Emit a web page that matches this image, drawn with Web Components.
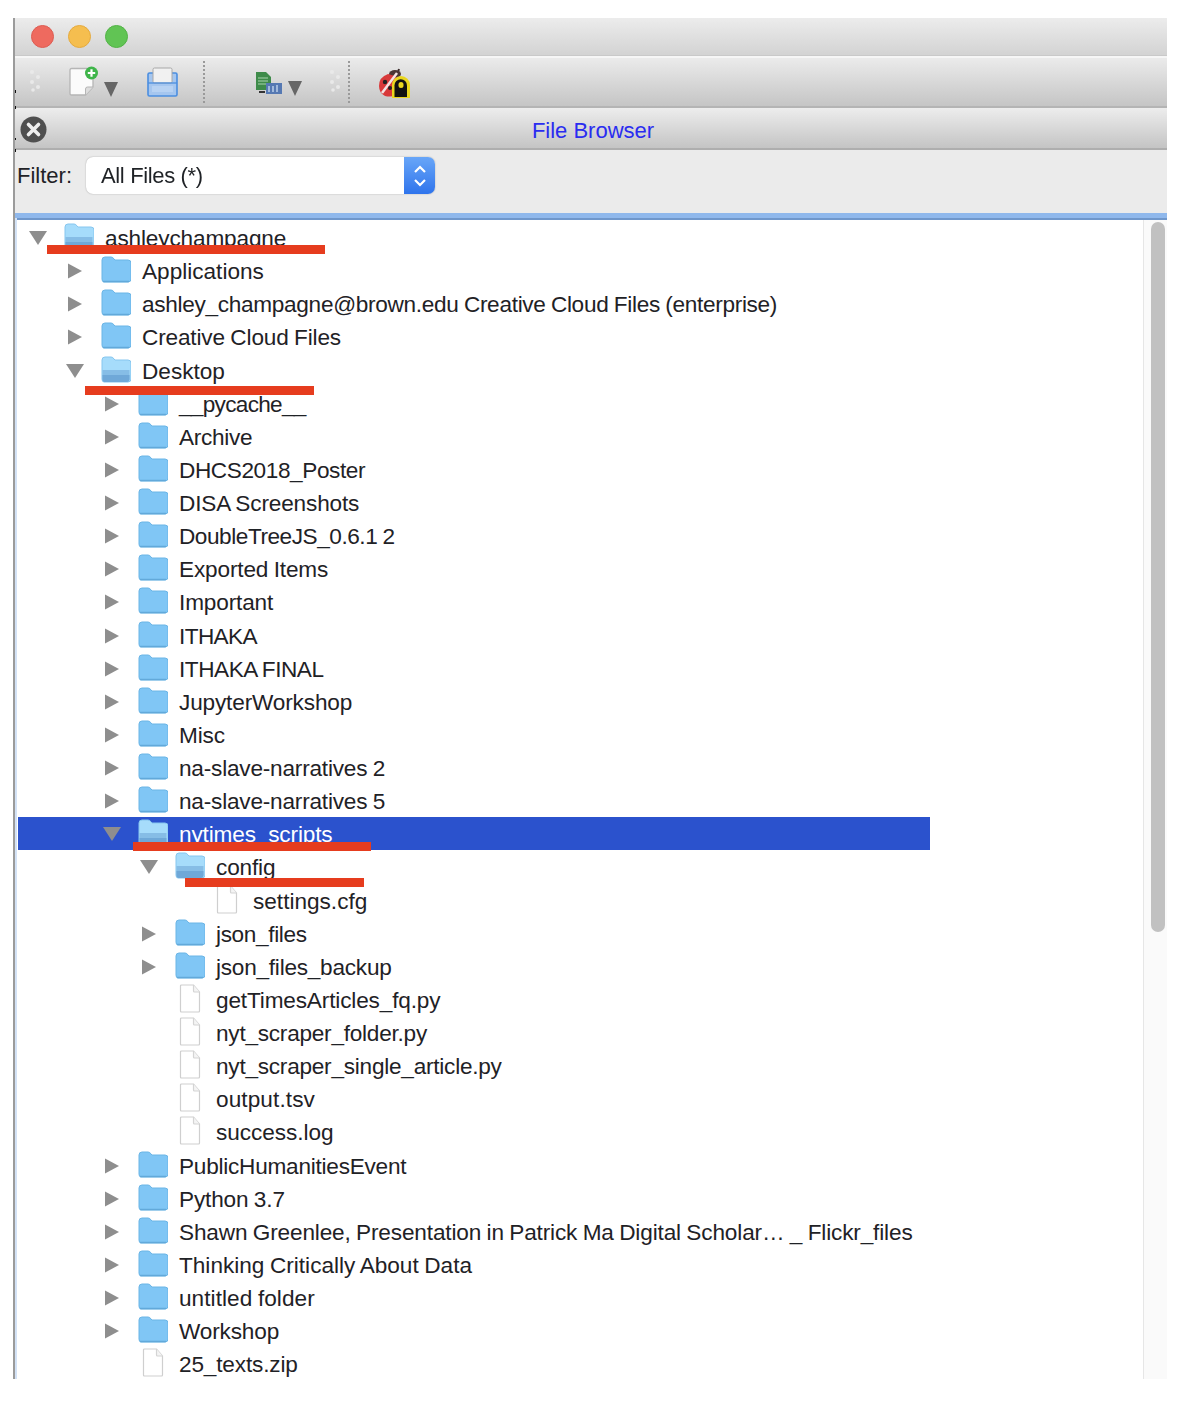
<!DOCTYPE html>
<html>
<head>
<meta charset="utf-8">
<style>
  html, body { margin: 0; background: #fff; }
  body { font-family: "Liberation Sans", Arial, sans-serif; color: #1f2226; }
</style>
</head>
<body>
<app-window>
  <title-bar></title-bar>
  <tool-bar></tool-bar>
  <tab-bar>File Browser</tab-bar>
  <filter-bar>All Files (*)</filter-bar>
  <file-tree>
    <tree-row kind="folder" state="open">ashleychampagne</tree-row>
    <tree-row depth="1" kind="folder" style="letter-spacing:0">Applications</tree-row>
    <tree-row depth="1" kind="folder" style="letter-spacing:-.3px">ashley_champagne@brown.edu Creative Cloud Files (enterprise)</tree-row>
    <tree-row depth="1" kind="folder">Creative Cloud Files</tree-row>
    <tree-row depth="1" kind="folder" state="open" style="letter-spacing:0">Desktop</tree-row>
    <tree-row depth="2" kind="folder" style="letter-spacing:-.7px">__pycache__</tree-row>
    <tree-row depth="2" kind="folder" style="letter-spacing:-.3px">Archive</tree-row>
    <tree-row depth="2" kind="folder" style="letter-spacing:-.4px">DHCS2018_Poster</tree-row>
    <tree-row depth="2" kind="folder">DISA Screenshots</tree-row>
    <tree-row depth="2" kind="folder" style="letter-spacing:-.45px">DoubleTreeJS_0.6.1 2</tree-row>
    <tree-row depth="2" kind="folder">Exported Items</tree-row>
    <tree-row depth="2" kind="folder">Important</tree-row>
    <tree-row depth="2" kind="folder" style="letter-spacing:-.6px">ITHAKA</tree-row>
    <tree-row depth="2" kind="folder" style="letter-spacing:-.45px">ITHAKA FINAL</tree-row>
    <tree-row depth="2" kind="folder">JupyterWorkshop</tree-row>
    <tree-row depth="2" kind="folder">Misc</tree-row>
    <tree-row depth="2" kind="folder" style="letter-spacing:-.2px">na-slave-narratives 2</tree-row>
    <tree-row depth="2" kind="folder" style="letter-spacing:-.2px">na-slave-narratives 5</tree-row>
    <tree-row depth="2" kind="folder" state="open" selected>nytimes_scripts</tree-row>
    <tree-row depth="3" kind="folder" state="open">config</tree-row>
    <tree-row depth="4" kind="file" style="letter-spacing:0">settings.cfg</tree-row>
    <tree-row depth="3" kind="folder" style="letter-spacing:-.35px">json_files</tree-row>
    <tree-row depth="3" kind="folder" style="letter-spacing:-.24px">json_files_backup</tree-row>
    <tree-row depth="3" kind="file">getTimesArticles_fq.py</tree-row>
    <tree-row depth="3" kind="file" style="letter-spacing:-.24px">nyt_scraper_folder.py</tree-row>
    <tree-row depth="3" kind="file" style="letter-spacing:-.24px">nyt_scraper_single_article.py</tree-row>
    <tree-row depth="3" kind="file" style="letter-spacing:.1px">output.tsv</tree-row>
    <tree-row depth="3" kind="file" style="letter-spacing:-.05px">success.log</tree-row>
    <tree-row depth="2" kind="folder" style="letter-spacing:-.24px">PublicHumanitiesEvent</tree-row>
    <tree-row depth="2" kind="folder">Python 3.7</tree-row>
    <tree-row depth="2" kind="folder">Shawn Greenlee, Presentation in Patrick Ma Digital Scholar… _ Flickr_files</tree-row>
    <tree-row depth="2" kind="folder" style="letter-spacing:0">Thinking Critically About Data</tree-row>
    <tree-row depth="2" kind="folder" style="letter-spacing:.05px">untitled folder</tree-row>
    <tree-row depth="2" kind="folder">Workshop</tree-row>
    <tree-row depth="2" kind="file">25_texts.zip</tree-row>
    <!-- red annotation strokes drawn over the tree -->
    <red-mark slot="marks" style="left:32px;top:27px;width:278px"></red-mark>
    <red-mark slot="marks" style="left:70px;top:168px;width:229px"></red-mark>
    <red-mark slot="marks" style="left:118px;top:624px;width:238px"></red-mark>
    <red-mark slot="marks" style="left:170px;top:660px;width:179px"></red-mark>
  </file-tree>
</app-window>

<script>
const FOLDER_CLOSED = `
  <svg width="30" height="27" viewBox="0 0 30 27">
    <path d="M1 4q0-3 3-3h6q2 0 3 2l1 1h13q3 0 3 3v16q0 3-3 3H3q-2 0-2-3z" fill="#80c6f5" stroke="#6bb5e6"/>
    <path d="M2 25.500h26" stroke="#62a9da" stroke-width="1.500"/>
  </svg>`;

const FOLDER_OPEN = `
  <svg width="30" height="27" viewBox="0 0 30 27">
    <path d="M1 4q0-3 3-3h6q2 0 3 2l1 1h13q3 0 3 3v16q0 3-3 3H3q-2 0-2-3z" fill="#a6dcfb" stroke="#86c6ef"/>
    <path d="M1.500 14h27v9q0 3-3 3H4q-2.500 0-2.500-3z" fill="#86bde6"/>
    <path d="M1.500 19h27v4q0 3-3 3H4q-2.500 0-2.500-3z" fill="#6fa8d8"/>
  </svg>`;

const FILE_ICON = `
  <svg width="22" height="29" viewBox="0 0 22 29">
    <path d="M1.500 2q0-1 1-1h12l6 7v19q0 1-1 1h-17q-1 0-1-1z" fill="#fff" stroke="#cfcfcf" stroke-width="1.200"/>
    <path d="M14.500 1v6q0 1 1 1h5" fill="#f4f4f4" stroke="#d4d4d4" stroke-width="1.200"/>
  </svg>`;

const ARROW_RIGHT = `<svg width="18" height="16" viewBox="0 0 18 16"><path d="M2 0.500L16 8 2 15.500z" fill="#8e8e8e"/></svg>`;
const ARROW_DOWN = `<svg width="18" height="16" viewBox="0 0 18 16"><path d="M0 1h18L9 15z" fill="#8e8e8e"/></svg>`;

const GRIP = `
  <svg width="12" height="24" viewBox="0 0 12 24" fill="#e9e9e9">
    <circle cx="3" cy="3" r="2"/><circle cx="9" cy="8" r="2"/><circle cx="3" cy="13" r="2"/><circle cx="9" cy="18" r="2"/><circle cx="4" cy="21" r="1.800"/>
  </svg>`;

const DROP = `<svg width="14" height="15" viewBox="0 0 14 15"><path d="M0 0h14L7 15z" fill="#666"/></svg>`;

class AppWindow extends HTMLElement {
  connectedCallback() {
    this.attachShadow({ mode: 'open' });
    this.shadowRoot.innerHTML = `
      <style>
        :host {
          display: flex;
          flex-direction: column;
          width: 1154px;
          height: 1361px;
          margin: 18px 0 0 13px;
          box-sizing: border-box;
          border-left: 2px solid #9b9b9b;
          overflow: hidden;
          filter: blur(0.6px);
          position: relative;
        }
        .speck {
          position: absolute;
          left: -2px;
          width: 3px;
          height: 3px;
          background: #111;
        }
      </style>
      <slot></slot>
      <div class="speck" style="top:72px"></div>
      <div class="speck" style="top:88px"></div>
      <div class="speck" style="top:120px;height:2px"></div>
      <div class="speck" style="top:131px"></div>
    `;
  }
}

class TitleBar extends HTMLElement {
  connectedCallback() {
    this.attachShadow({ mode: 'open' });
    this.shadowRoot.innerHTML = `
      <style>
        :host {
          display: flex;
          align-items: center;
          gap: 14px;
          height: 38px;
          padding-left: 16px;
          box-sizing: border-box;
          background: linear-gradient(#ececec, #d3d3d3);
          border-bottom: 1px solid #c9c9c9;
        }
        i {
          width: 23px;
          height: 23px;
          border-radius: 50%;
          box-sizing: border-box;
          border: 1px solid var(--edge);
          background: var(--fill);
        }
      </style>
      <i style="--fill:#ee6a5f;--edge:#dd5c52"></i>
      <i style="--fill:#f5be4f;--edge:#e5aa3e"></i>
      <i style="--fill:#61c454;--edge:#52b346"></i>
    `;
  }
}

class ToolBar extends HTMLElement {
  connectedCallback() {
    this.attachShadow({ mode: 'open' });
    this.shadowRoot.innerHTML = `
      <style>
        :host {
          display: flex;
          align-items: center;
          height: 52px;
          box-sizing: border-box;
          border-top: 2px solid #f6f6f6;
          border-bottom: 2px solid #b4b4b4;
          background: linear-gradient(#ebebeb, #c5c5c5);
        }
        .item { display: flex; flex: none; }
        .sep {
          flex: none;
          height: 42px;
          border-left: 2px dotted #9a9a9a;
        }
      </style>
      <div class="item" style="margin:0 0 2px 14px">${GRIP}</div>
      <div class="item" style="margin:0 0 0 27px">
        <svg width="32" height="32" viewBox="0 0 32 32">
          <path d="M2 4q0-1.500 1.500-1.500h20q1.500 0 1.500 1.500v17l-7.500 8H3.500q-1.500 0-1.500-1.500z" fill="#fbfbfb" stroke="#b5b5b5" stroke-width="1.300"/>
          <path d="M17.500 29v-6q0-2 2-2h5.500" fill="#ddd" stroke="#b5b5b5"/>
          <circle cx="23.500" cy="7" r="6.500" fill="#3fb54a"/>
          <path d="M23.500 3.300v7.400M19.800 7h7.400" stroke="#fff" stroke-width="2.200"/>
        </svg>
      </div>
      <div class="item" style="margin:14px 0 0 4px">${DROP}</div>
      <div class="item" style="margin:0 0 0 29px">
        <svg width="31" height="30" viewBox="0 0 31 30">
          <rect x="1" y="6" width="29" height="23" rx="1.500" fill="#a5c6ef" stroke="#4b8ee0" stroke-width="1.600"/>
          <rect x="6" y="1" width="19" height="15" rx="1.500" fill="#f1f1f1" stroke="#a8a8a8"/>
          <path d="M1 16h29" stroke="#4b8ee0" stroke-width="1.300"/>
          <rect x="5" y="19" width="21" height="6" fill="#b7d2f3"/>
        </svg>
      </div>
      <div class="sep" style="margin-left:25px"></div>
      <div class="item" style="margin:2px 0 0 50px">
        <svg width="28" height="24" viewBox="0 0 28 24">
          <path d="M1 1h10l5 5v13H1z" fill="#3e8b4a"/>
          <path d="M3 7h10M3 10h10M3 13h8" stroke="#a9d4ae"/>
          <rect x="11" y="12" width="16" height="11" fill="#5679b3"/>
          <path d="M14 15v6M18 15v6M22 14v7" stroke="#bcd0ea" stroke-width="1.500"/>
          <path d="M4 21h6" stroke="#333" stroke-width="2"/>
        </svg>
      </div>
      <div class="item" style="margin:12px 0 0 5px">${DROP}</div>
      <div class="item" style="margin:0 0 2px 27px">${GRIP}</div>
      <div class="sep" style="margin-left:7px"></div>
      <div class="item" style="margin:0 0 0 28px">
        <svg width="32" height="31" viewBox="0 0 32 31">
          <path d="M17 4l-3 4M21 2l-2 6" stroke="#3a2a2a" stroke-width="2"/>
          <ellipse cx="17" cy="7" rx="6" ry="4" fill="#4a3434"/>
          <path d="M1 19q0-9 9-12l7 2 7 8v8q-8 6-17 4-6-3-6-10z" fill="#d8393a"/>
          <path d="M4 26L19 6" stroke="#f4e4e4" stroke-width="2.500"/>
          <circle cx="7" cy="15" r="2.200" fill="#222"/><circle cx="12" cy="21" r="2" fill="#222"/>
          <path d="M14 18a8 8 0 0 1 18 0v13H14z" fill="#e9d61f"/>
          <path d="M16.500 18.500a6 6 0 0 1 12.500 0V30H16.500z" fill="#111"/>
          <rect x="20.500" y="15" width="5" height="6" rx="2.500" fill="#e9d61f"/>
        </svg>
      </div>
    `;
  }
}

class TabBar extends HTMLElement {
  connectedCallback() {
    this.attachShadow({ mode: 'open' });
    this.shadowRoot.innerHTML = `
      <style>
        :host {
          display: block;
          position: relative;
          height: 42px;
          box-sizing: border-box;
          padding-left: 4px;
          border-top: 1px solid #ededed;
          border-bottom: 2px solid #aeaeae;
          background: linear-gradient(#ececec, #c4c4c4);
          text-align: center;
          line-height: 44px;
          font-size: 22px;
          color: #2a2cf0;
        }
        .close {
          position: absolute;
          left: 5px;
          top: 7px;
          width: 27px;
          height: 27px;
        }
      </style>
      <svg class="close" viewBox="0 0 27 27">
        <circle cx="13.500" cy="13.500" r="13" fill="#4f4f4f"/>
        <path d="M8.500 8.500l10 10M18.500 8.500l-10 10" stroke="#efefef" stroke-width="3.600" stroke-linecap="round"/>
      </svg>
      <slot></slot>
    `;
  }
}

class FilterBar extends HTMLElement {
  connectedCallback() {
    this.attachShadow({ mode: 'open' });
    this.shadowRoot.innerHTML = `
      <style>
        :host {
          display: flex;
          align-items: flex-start;
          height: 63px;
          box-sizing: border-box;
          padding: 7px 0 0 2px;
          background: #ebebeb;
          font-size: 22px;
        }
        .label { width: 69px; line-height: 38px; }
        .combo {
          display: flex;
          width: 349px;
          height: 37px;
          box-sizing: border-box;
          border-radius: 7px;
          background: #fff;
          box-shadow: 0 0 1.500px #9a9a9a;
          overflow: hidden;
        }
        .value { flex: 1; padding-left: 15px; line-height: 38px; letter-spacing: -.35px; }
        .btn {
          width: 31px;
          display: flex;
          align-items: center;
          justify-content: center;
          background: linear-gradient(#68a6f8, #2f74ec);
        }
      </style>
      <div class="label">Filter:</div>
      <div class="combo">
        <div class="value"><slot></slot></div>
        <div class="btn">
          <svg width="14" height="26" viewBox="0 0 14 26" fill="none" stroke="#fff" stroke-width="2.200">
            <path d="M2 9l5-5 5 5M2 17l5 5 5-5"/>
          </svg>
        </div>
      </div>
    `;
  }
}

class FileTree extends HTMLElement {
  connectedCallback() {
    this.attachShadow({ mode: 'open' });
    this.shadowRoot.innerHTML = `
      <style>
        :host {
          display: flex;
          flex: 1;
          min-height: 0;
          position: relative;
          overflow: hidden;
          box-sizing: border-box;
          border-top: 5px solid #8fb8ec;
          background: #fff;
          box-shadow: inset 0 2px 0 #6f97cb;
        }
        .rows {
          flex: 1;
          display: flex;
          flex-direction: column;
          padding: 3px 0 0 3px;
          box-sizing: border-box;
          box-shadow: inset 2px 0 0 #d3e2f6;
        }
        .bar {
          flex: none;
          width: 24px;
          box-sizing: border-box;
          border-left: 1px solid #e6e6e6;
          background: #fafafa;
          margin-top: 2px;
          padding: 2px 2px 0 7px;
        }
        .thumb {
          height: 710px;
          border-radius: 7px;
          background: #c1c1c1;
        }
      </style>
      <div class="rows"><slot></slot></div>
      <div class="bar"><div class="thumb"></div></div>
      <slot name="marks"></slot>
    `;
  }
}

class TreeRow extends HTMLElement {
  connectedCallback() {
    const depth = Number(this.getAttribute('depth') || 0);
    const isFolder = this.getAttribute('kind') === 'folder';
    const isOpen = this.getAttribute('state') === 'open';
    let arrow = '';
    let icon = FILE_ICON;
    if (isFolder) {
      arrow = isOpen ? ARROW_DOWN : ARROW_RIGHT;
      icon = isOpen ? FOLDER_OPEN : FOLDER_CLOSED;
    }
    this.attachShadow({ mode: 'open' });
    this.shadowRoot.innerHTML = `
      <style>
        :host {
          display: flex;
          flex: none;
          align-items: center;
          width: 912px;
          height: 33.130px;
          box-sizing: border-box;
          padding-left: ${11 + depth * 37}px;
          font-size: 22.600px;
          letter-spacing: -.15px;
          word-spacing: -.7px;
          white-space: nowrap;
        }
        :host([selected]) {
          background: #2b52cd;
          color: #fff;
        }
        .arrow { width: 18px; height: 16px; display: flex; margin: 1px 17px 0 0; flex: none; }
        .icon { width: 30px; display: flex; justify-content: center; margin: 0 11px 2px 0; flex: none; }
        .label { padding-top: 3px; }
      </style>
      <div class="arrow">${arrow}</div>
      <div class="icon">${icon}</div>
      <div class="label"><slot></slot></div>
    `;
  }
}

class RedMark extends HTMLElement {
  connectedCallback() {
    this.attachShadow({ mode: 'open' });
    this.shadowRoot.innerHTML = `
      <style>
        :host {
          display: block;
          position: absolute;
          height: 9px;
          background: #e63c1e;
        }
      </style>
    `;
  }
}

customElements.define('app-window', AppWindow);
customElements.define('title-bar', TitleBar);
customElements.define('tool-bar', ToolBar);
customElements.define('tab-bar', TabBar);
customElements.define('filter-bar', FilterBar);
customElements.define('file-tree', FileTree);
customElements.define('tree-row', TreeRow);
customElements.define('red-mark', RedMark);
</script>
</body>
</html>
